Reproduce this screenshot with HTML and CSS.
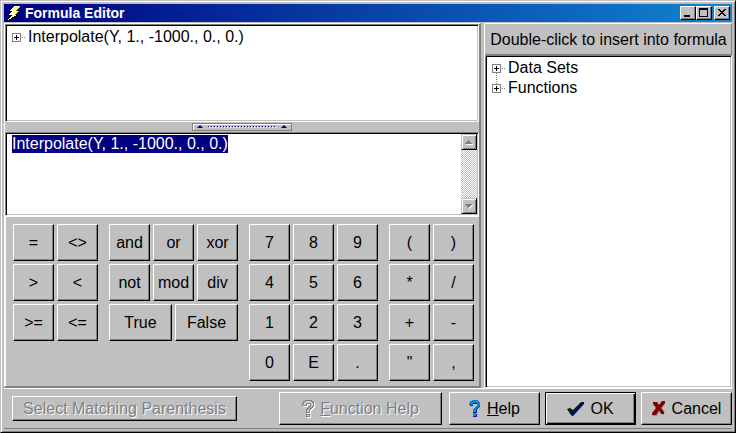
FILE: index.html
```html
<!DOCTYPE html>
<html lang="en">
<head>
<meta charset="utf-8">
<title>Formula Editor</title>
<link rel="stylesheet" href="styles.css">
</head>
<body>
<div class="window">
  <header class="titlebar">
    <svg class="bolt" viewBox="0 0 16 16" aria-hidden="true" shape-rendering="crispEdges">
      <path d="M8 1h6v1l-3 4h3v1l-4 3h3v1L2 16H1l3-5H2v-1l3-3H3V6z" fill="#000"/>
      <path d="M8 1h6l-4 5h3l-5 4h3l-9 5 4-5H3l4-4H4z" fill="#ffff99"/>
      <path d="M8 1h2L6 6H4zM6 6h2L4 10H3z" fill="#fff"/>
      <path d="M13 2h1l-3 4h-1zM12 6h1l-4 4H8z" fill="#808040"/>
    </svg>
    <h1>Formula Editor</h1>
    <div class="winbuttons">
      <button class="raised winbtn" aria-label="Minimize"><svg viewBox="0 0 12 10" shape-rendering="crispEdges"><path d="M2 7h6v2H2z"/></svg></button>
      <button class="raised winbtn" aria-label="Maximize"><svg viewBox="0 0 12 10" shape-rendering="crispEdges"><path fill-rule="evenodd" d="M1 0h9v9H1zM2 2v6h7V2z"/></svg></button>
      <button class="raised winbtn close" aria-label="Close"><svg viewBox="0 0 12 10" shape-rendering="crispEdges"><path d="M2 1h2v1h1v1h2V2h1V1h2v1H9v1H8v1H7v1h1v1h1v1h1v1H8V7H7V6H5v1H4v1H2V7h1V6h1V5h1V4H4V3H3V2H2z"/></svg></button>
    </div>
  </header>

  <main class="content">
    <section class="left">
      <ul class="sunken tree outline">
        <li><button class="expander" aria-label="Expand"></button><span>Interpolate(Y, 1., -1000., 0., 0.)</span></li>
      </ul>
      <div class="splitter">
        <button class="handle" aria-label="Collapse pane">
          <i class="arrow"></i><i class="dots"></i><i class="arrow"></i>
        </button>
      </div>
      <div class="sunken editor">
        <textarea id="formula" aria-label="Formula" spellcheck="false" autofocus>Interpolate(Y, 1., -1000., 0., 0.)</textarea>
        <div class="scrollbar">
          <button class="raised scroll" aria-label="Scroll up" disabled><svg viewBox="0 0 12 12" shape-rendering="crispEdges"><path d="M3 8h7v1H3z" fill="#fff"/><path d="M5 4h1v1h1v1h1v1h1v1H2V7h1V6h1V5h1z" fill="#808080"/></svg></button>
          <button class="raised scroll" aria-label="Scroll down" disabled><svg viewBox="0 0 12 12" shape-rendering="crispEdges"><path d="M9 5h1v1H9v1H8v1H7v1H6V7z" fill="#fff"/><path d="M2 4h7v1H8v1H7v1H6v1H5V7H4V6H3V5H2z" fill="#808080"/></svg></button>
        </div>
      </div>
      <div class="keypad">
        <div class="keys two">
          <button class="raised">=</button><button class="raised">&lt;&gt;</button>
          <button class="raised">&gt;</button><button class="raised">&lt;</button>
          <button class="raised">&gt;=</button><button class="raised">&lt;=</button>
        </div>
        <div class="keys six">
          <button class="raised">and</button><button class="raised">or</button><button class="raised">xor</button>
          <button class="raised">not</button><button class="raised">mod</button><button class="raised">div</button>
          <button class="raised wide">True</button><button class="raised wide">False</button>
        </div>
        <div class="keys three">
          <button class="raised">7</button><button class="raised">8</button><button class="raised">9</button>
          <button class="raised">4</button><button class="raised">5</button><button class="raised">6</button>
          <button class="raised">1</button><button class="raised">2</button><button class="raised">3</button>
          <button class="raised">0</button><button class="raised">E</button><button class="raised">.</button>
        </div>
        <div class="keys two">
          <button class="raised">(</button><button class="raised">)</button>
          <button class="raised">*</button><button class="raised">/</button>
          <button class="raised">+</button><button class="raised">-</button>
          <button class="raised">"</button><button class="raised">,</button>
        </div>
      </div>
    </section>

    <section class="right">
      <h2>Double-click to insert into formula</h2>
      <ul class="sunken tree library">
        <li><button class="expander" aria-label="Expand"></button><span>Data Sets</span></li>
        <li><button class="expander" aria-label="Expand"></button><span>Functions</span></li>
      </ul>
    </section>
  </main>

  <footer class="actions">
    <button class="raised match" disabled>Select Matching Parenthesis</button>
    <div class="dialog">
      <button class="raised func" disabled>
        <svg class="question" viewBox="0 0 12 17" aria-hidden="true" shape-rendering="crispEdges">
          <path d="M3 0h6v1h1v1h1v4h-1v1H9v1H8v1H7v3H4V9h1V8h1V7h1V6h1V3H4v2H0V3h1V1h2zM4 14h3v2H4z" transform="translate(1 1)" fill="#fff" stroke="#fff"/>
          <path d="M3 0h6v1h1v1h1v4h-1v1H9v1H8v1H7v3H4V9h1V8h1V7h1V6h1V3H4v2H0V3h1V1h2zM4 14h3v2H4z" fill="#d0d0d0" stroke="#808080"/>
        </svg>
        <span><u>F</u>unction Help</span>
      </button>
      <button class="raised help">
        <svg class="question" viewBox="0 0 12 17" aria-hidden="true" shape-rendering="crispEdges">
          <path d="M3 1h7v1h1v5h-1v1H9v1H8v4H4v-2h2V8h1V7h1V4H4v2H1V3h2zM4 14h4v3H4z" fill="#0020a0"/>
          <path d="M3 0h6v1h1v1h1v4h-1v1H9v1H8v1H7v3H4V9h1V8h1V7h1V6h1V3H4v2H0V3h1V1h2zM4 13h3v3H4z" fill="#1084d0"/>
        </svg>
        <span><u>H</u>elp</span>
      </button>
      <button class="raised ok">
        <svg class="check" viewBox="0 0 17 16" aria-hidden="true">
          <path d="M1 9l3-1 2 2 9-9h2v2L7 14l-1 1H5z" fill="#0000a0"/>
          <path d="M0 8l3-1 3 2 8-8h2v1L6 13l-1 1H4z" fill="#002010"/>
        </svg>
        <span>OK</span>
      </button>
      <button class="raised cancel">
        <svg class="cross" viewBox="0 0 14 15" aria-hidden="true">
          <path d="M2 2h4l2 3 3-4h2v2l-3 4 3 5-2 2-3-4-3 5H1v-2l4-5z" fill="#909090"/>
          <path d="M1 1h4l2 3 3-4h3v2L9 7l3 4v2H9L7 9l-3 5H0v-2l4-5-3-4z" fill="#800000"/>
        </svg>
        <span>Cancel</span>
      </button>
    </div>
  </footer>
</div>
<script src="script.js"></script>
</body>
</html>
```
FILE: styles.css
```css
* { box-sizing: border-box; }

body {
  margin: 0;
  background: #c0c0c0;
  color: #000;
  font: 16px/18px "Liberation Sans", Arial, sans-serif;
}

h1, h2, ul { margin: 0; padding: 0; font-weight: normal; }

button {
  padding: 0;
  border: 0;
  background: #c0c0c0;
  color: #000;
  font: inherit;
}

svg { display: block; flex: none; }

.window {
  display: flex;
  flex-direction: column;
  min-height: 100vh;
  padding: 3px;
  border: 1px solid;
  border-color: #c0c0c0 #000 #000 #c0c0c0;
  box-shadow: inset 1px 1px #fff, inset -1px -1px #808080;
}

.raised {
  border: 1px solid;
  border-color: #fff #000 #000 #fff;
  box-shadow: inset -1px -1px #808080;
}

.sunken {
  border: 1px solid;
  border-color: #808080 #fff #fff #808080;
  box-shadow: inset 1px 1px #000, inset -1px -1px #c0c0c0;
  background: #fff;
}

/* Title bar */
.titlebar {
  display: flex;
  align-items: center;
  height: 18px;
  padding: 0 2px;
  background: linear-gradient(90deg, #000080, #1084d0);
  color: #fff;
}
.bolt { width: 16px; height: 16px; }
h1 {
  flex: 1;
  margin-left: 3px;
  font-size: 14px;
  font-weight: bold;
}
.winbuttons { display: flex; }
.winbtn { width: 16px; height: 14px; padding: 1px; }
.winbtn svg { width: 12px; height: 10px; }
.close { margin-left: 2px; }

/* Panes */
.content {
  display: grid;
  grid-template-columns: 1fr 248px;
  gap: 3px;
  flex: 1;
  margin-top: 1px;
}
.left {
  display: flex;
  flex-direction: column;
  border: solid;
  border-width: 1px 2px 2px 1px;
  border-color: #fff #808080 #808080 #fff;
}
.right {
  display: flex;
  flex-direction: column;
  border-left: 1px solid #fff;
}
h2 {
  padding: 7px 0 6px;
  border: 1px solid;
  border-color: #fff #808080 #808080 #c0c0c0;
  font-size: 16px;
  line-height: 17px;
  text-align: center;
}

/* Trees */
.tree { list-style: none; padding: 2px 6px; }
.tree li { display: flex; align-items: center; height: 20px; }
.tree span { margin-left: 7px; }
.expander {
  position: relative;
  width: 9px;
  height: 9px;
  border: 1px solid #808080;
  background:
    linear-gradient(#000, #000) center / 5px 1px no-repeat,
    linear-gradient(#000, #000) center / 1px 5px no-repeat,
    #fff;
}
.expander::before {
  content: "";
  position: absolute;
  left: 9px;
  top: 3px;
  width: 3px;
  border-top: 1px dotted #808080;
}
li + li .expander::after {
  content: "";
  position: absolute;
  left: 3px;
  bottom: 8px;
  height: 11px;
  border-left: 1px dotted #808080;
}
.outline { flex: 97 1 0; }
.library { flex: 1; }

/* Splitter */
.splitter { display: flex; justify-content: center; padding: 1px 0; }
.handle {
  display: flex;
  align-items: center;
  justify-content: center;
  gap: 5px;
  width: 100px;
  height: 8px;
  border: 1px solid #808080;
  box-shadow: inset 1px 1px #fff;
}
.arrow {
  border: 3px solid transparent;
  border-top: 0;
  border-bottom: 3px solid #000080;
}
.dots {
  width: 68px;
  height: 2px;
  background:
    repeating-linear-gradient(90deg, #000080 0 1px, transparent 1px 3px) 0 0 / 100% 1px no-repeat,
    repeating-linear-gradient(90deg, transparent 0 1px, #fff 1px 2px, transparent 2px 3px) 0 1px / 100% 1px no-repeat;
}

/* Formula text */
.editor { display: flex; flex: 85 1 0; padding: 1px; }
textarea {
  flex: 1;
  min-width: 0;
  padding: 1px 5px;
  border: 0;
  outline: 0;
  resize: none;
  background: transparent;
  color: #000;
  font: inherit;
  overflow: hidden;
}
textarea::selection { background: #000080; color: #fff; }
.scrollbar {
  display: flex;
  flex-direction: column;
  justify-content: space-between;
  background: repeating-conic-gradient(#fff 0 25%, #c0c0c0 0 50%) 0 0 / 2px 2px;
}
.scroll {
  width: 16px;
  height: 16px;
  padding: 1px;
  border-color: #c0c0c0 #000 #000 #c0c0c0;
  box-shadow: inset 1px 1px #fff, inset -1px -1px #808080;
}
.scroll svg { width: 12px; height: 12px; }

/* Keypad */
.keypad {
  display: flex;
  align-items: flex-start;
  gap: 11px;
  padding: 7px 5px 5px 7px;
  border: solid #fff;
  border-width: 1px 0 0 1px;
}
.keys { display: grid; grid-auto-rows: 37px; gap: 3px; }
.two { flex: 85; grid-template-columns: repeat(2, 1fr); }
.three { flex: 129; grid-template-columns: repeat(3, 1fr); }
.six { flex: 129; grid-template-columns: repeat(6, 1fr); }
.six button { grid-column: span 2; }
.six .wide { grid-column: span 3; }
.keys button { min-width: 0; }

/* Bottom bar */
.actions {
  display: flex;
  align-items: center;
  justify-content: space-between;
  padding: 3px 0 3px 8px;
  border-top: 1px solid #fff;
  border-bottom: 1px solid #808080;
}
.match { width: 225px; height: 25px; }
.dialog { display: flex; gap: 5px; }
.dialog button {
  display: flex;
  align-items: center;
  justify-content: center;
  gap: 6px;
  width: 91px;
  height: 33px;
}
.dialog .func { width: 163px; margin-right: 2px; }
.dialog .ok {
  border-color: #000;
  box-shadow: inset 1px 1px #fff, inset -1px -1px #000, inset -2px -2px #808080;
}
.match:disabled, .func:disabled { color: #808080; text-shadow: 1px 1px #fff; }
.question { width: 12px; height: 17px; overflow: visible; }
.check { width: 17px; height: 16px; }
.cross { width: 14px; height: 15px; }
```
FILE: script.js
```js
const formula = document.getElementById('formula');
formula.focus();
formula.select();
```
